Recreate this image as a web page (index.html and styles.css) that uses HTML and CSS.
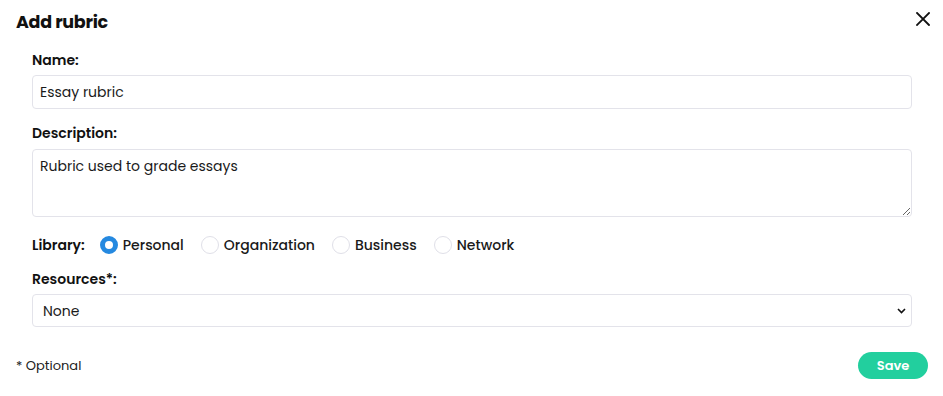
FILE: index.html
```html
<!DOCTYPE html>
<html>
<head>
<meta charset="utf-8">
<link rel="stylesheet" href="styles.css">
</head>
<body>
<div class="modal">
  <div class="header">
    <h1 class="title">Add rubric</h1>
    <button class="close" aria-label="Close">
      <svg width="14" height="14" viewBox="0 0 14 14"><path d="M1 1L13 13M13 1L1 13" stroke="#111" stroke-width="1.8" stroke-linecap="square"/></svg>
    </button>
  </div>
  <div class="form">
    <label class="label">Name:</label>
    <input class="input" type="text" value="Essay rubric">
    <label class="label">Description:</label>
    <textarea class="textarea">Rubric used to grade essays</textarea>
    <div class="library">
      <span class="lib-label">Library:</span>
      <label class="opt"><input type="radio" name="lib" class="radio" checked><span>Personal</span></label>
      <label class="opt"><input type="radio" name="lib" class="radio"><span>Organization</span></label>
      <label class="opt"><input type="radio" name="lib" class="radio"><span>Business</span></label>
      <label class="opt"><input type="radio" name="lib" class="radio"><span>Network</span></label>
    </div>
    <label class="label">Resources*:</label>
    <div class="select-wrap">
      <select class="select"><option>None</option></select>
      <svg class="chev" width="9" height="6" viewBox="0 0 9 6"><path d="M1 1L4.5 4.5L8 1" fill="none" stroke="#111" stroke-width="1.6"/></svg>
    </div>
  </div>
  <div class="footer">
    <span class="optional">* Optional</span>
    <button class="save">Save</button>
  </div>
</div>
</body>
</html>
```

FILE: styles.css
```css
* { box-sizing: border-box; }
body {
  margin: 0;
  background: #fff;
  font-family: "Poppins", "Open Sans", "Noto Sans", sans-serif;
  color: #1a1a1a;
}
.modal { width: 943px; height: 396px; }
.header {
  height: 42px;
  display: flex;
  align-items: center;
  justify-content: space-between;
  padding: 1px 13px 0 16px;
}
.title {
  margin: 0;
  font-size: 17.5px;
  font-weight: 700;
  line-height: 22px;
  color: #111;
  letter-spacing: -0.3px;
}
.close {
  border: 0;
  background: none;
  padding: 0;
  width: 14px;
  height: 14px;
  margin-top: -6px;
  display: flex;
}
.form {
  padding: 8px 31px 0 32px;
  display: flex;
  flex-direction: column;
}
.label {
  font-size: 14px;
  font-weight: 600;
  line-height: 20px;
  color: #111;
  margin-bottom: 5px;
}
.input, .textarea, .select {
  width: 100%;
  border: 1px solid #e3e3ea;
  border-radius: 4px;
  font-family: inherit;
  font-size: 14px;
  color: #1a1a1a;
  background: #fff;
  outline: none;
}
.input {
  height: 34px;
  padding: 0 7px;
  margin-bottom: 14px;
}
.textarea {
  height: 68px;
  padding: 6px 7px;
  line-height: 20px;
  resize: vertical;
  margin-top: 1px;
  margin-bottom: 18px;
}
.library {
  display: flex;
  align-items: center;
  height: 20px;
  margin-bottom: 14px;
  font-size: 14px;
  font-weight: 600;
  color: #111;
}
.lib-label { margin-right: 15px; }
.opt {
  display: flex;
  align-items: center;
  gap: 5px;
  margin-right: 17px;
  font-weight: 500;
  color: #1a1a1a;
}
.radio {
  appearance: none;
  -webkit-appearance: none;
  margin: 0;
  width: 18px;
  height: 18px;
  border-radius: 50%;
  border: 1px solid #e0e0e8;
  background: #fff;
}
.radio:checked {
  border: 5px solid #2589e0;
}
.select-wrap { position: relative; }
.select {
  appearance: none;
  -webkit-appearance: none;
  height: 33px;
  padding: 0 10px;
}
.chev {
  position: absolute;
  right: 6px;
  top: 14px;
  pointer-events: none;
}
.footer {
  display: flex;
  align-items: center;
  justify-content: space-between;
  padding: 25px 15px 0 16px;
}
.optional {
  font-size: 13px;
  color: #222;
}
.save {
  width: 70px;
  height: 27px;
  border: 0;
  border-radius: 14px;
  background: #22cf9e;
  color: #fff;
  font-family: inherit;
  font-size: 13px;
  font-weight: 600;
}
```
